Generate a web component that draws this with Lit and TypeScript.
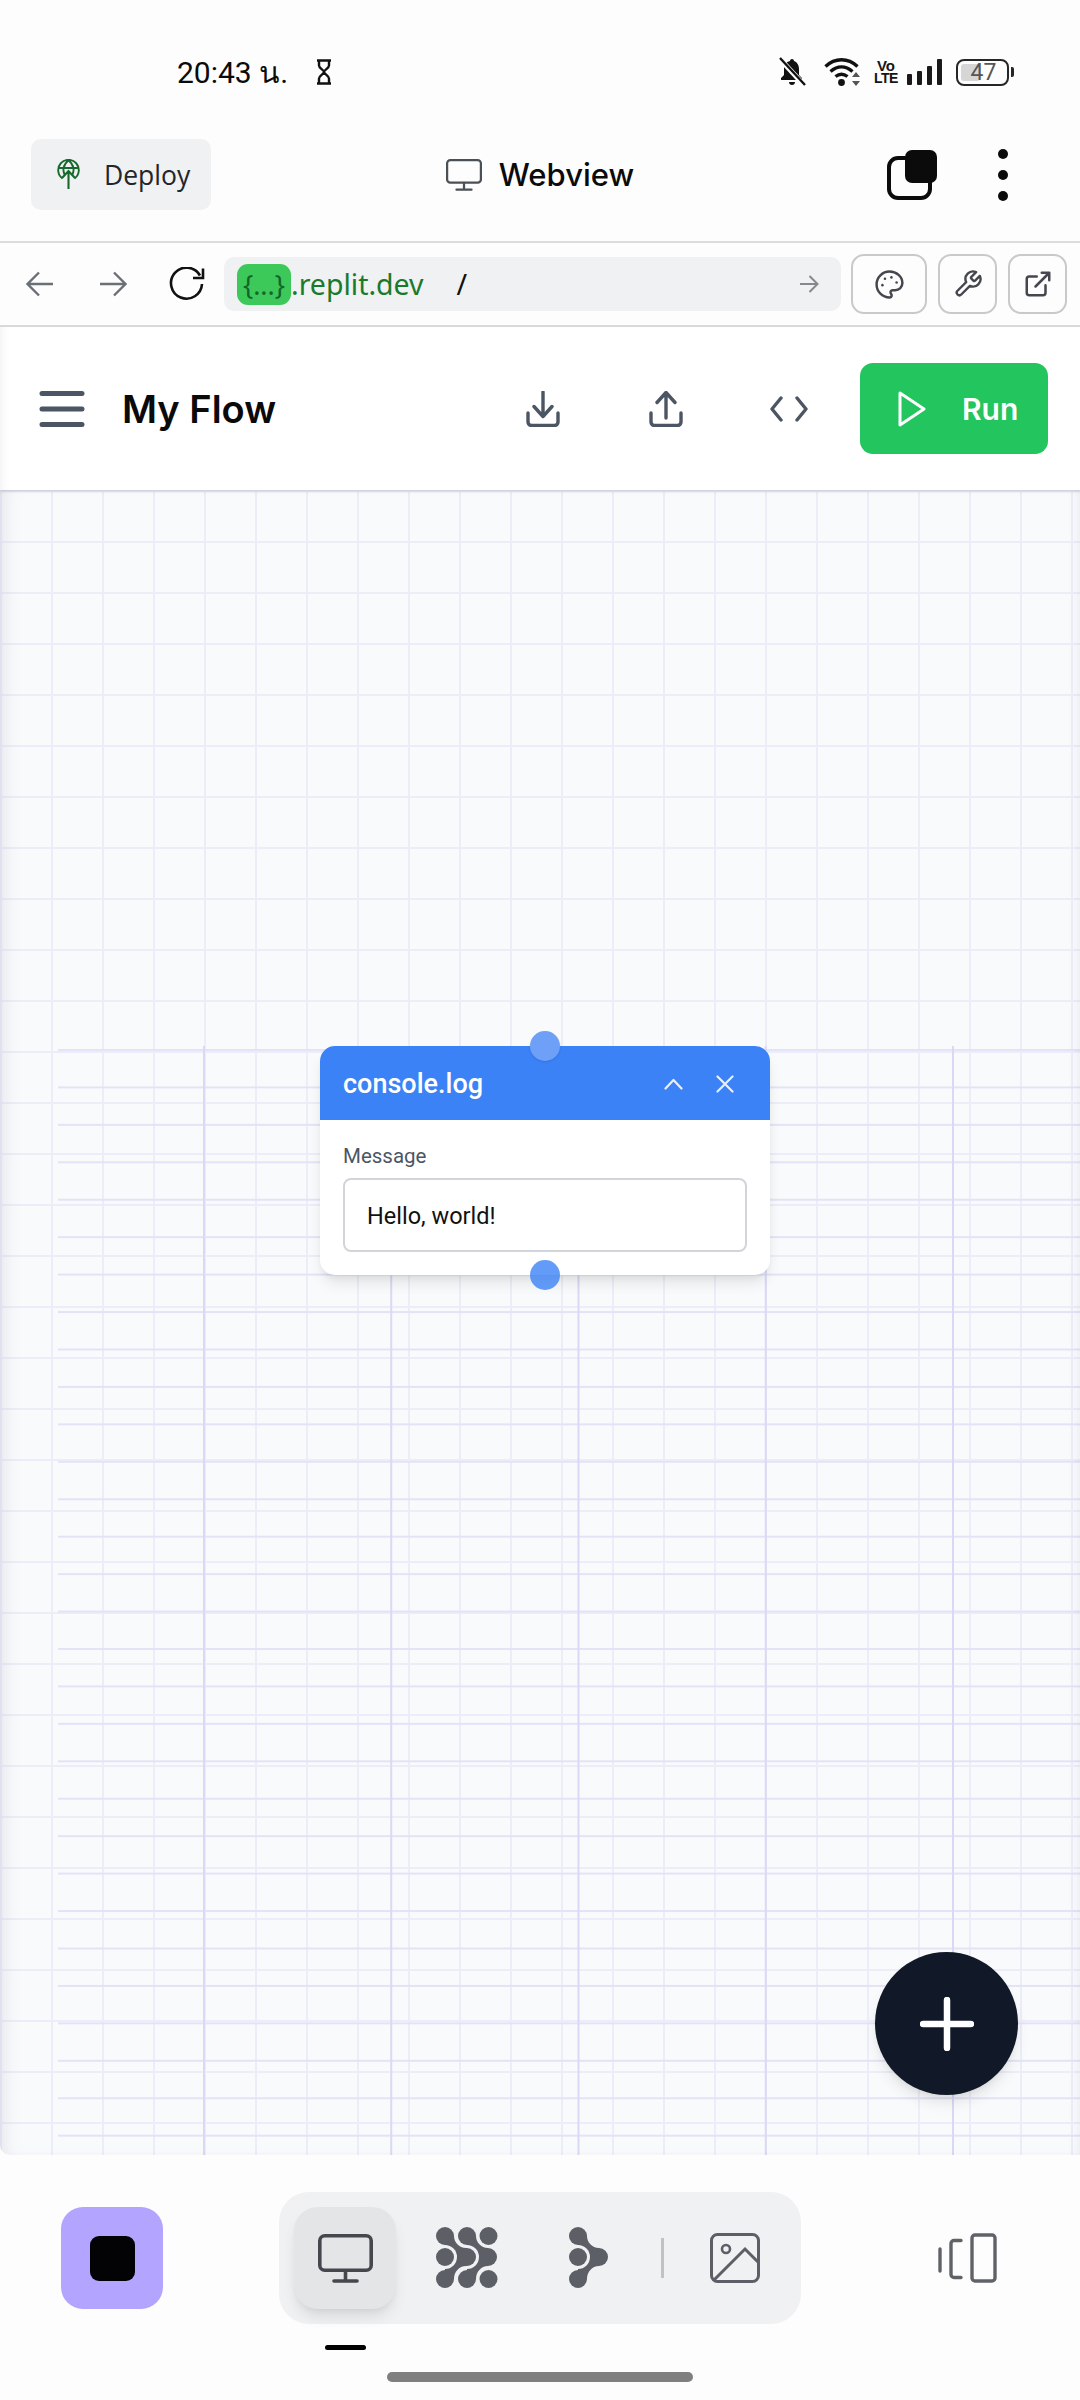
import { LitElement, html, css, svg } from 'lit';
import { customElement } from 'lit/decorators.js';

const DARK = '#4b5563';
const TAB = '#5c5f66';
const TAB_BG = '#f0f1f3';
const TOOL = '#44474d';
const SIGNAL_BARS = [11, 14, 19, 26];

const icon = (w: number, h: number, vb: string, body: unknown) => html`
  <svg width="${w}" height="${h}" viewBox="${vb}" fill="none" aria-hidden="true">${body}</svg>
`;

const monitor = (w: number, h: number, color: string, sw: number) => icon(w, h, '0 0 55 49', svg`
  <rect x="${sw / 2}" y="${sw / 2}" width="${55 - sw}" height="${38 - sw}" rx="5" stroke="${color}" stroke-width="${sw}" />
  <path d="M27.5 38v9M16 47h23" stroke="${color}" stroke-width="${sw}" stroke-linecap="round" />
`);

/* one "branch": two dots flowing into a blob on their right, with a gap cut round the middle dot */
const branch = (x: number) => svg`
  <path d="M${x} 9H${x + 9}C${x + 9} 15 ${x + 14} 21 ${x + 21} 21V39C${x + 14} 39 ${x + 9} 45 ${x + 9} 52H${x}Z" fill="${TAB}" />
  <circle cx="${x + 21}" cy="30" r="9" fill="${TAB}" />
  <path d="M${x} 18A12 12 0 0 1 ${x} 42Z" fill="${TAB_BG}" />
  <circle cx="${x}" cy="30" r="9" fill="${TAB}" />
  <circle cx="${x}" cy="9" r="9" fill="${TAB}" />
  <circle cx="${x}" cy="52" r="9" fill="${TAB}" />
`;

@customElement('app-root')
export class AppRoot extends LitElement {
  static styles = css`
    :host {
      display: flex;
      flex-direction: column;
      width: 1080px;
      height: 2400px;
      overflow: hidden;
      background: #fdfdfd;
      font-family: Roboto, "Noto Sans", sans-serif;
      color: #0b0b0b;
    }

    svg { display: block; flex: none; }

    /* status bar */
    .status {
      display: flex;
      align-items: center;
      height: 110px;
      padding: 34px 71px 0 177px;
      box-sizing: border-box;
    }
    .time { font-size: 30px; width: 138px; font-family: Roboto, "Noto Sans", "DejaVu Sans", sans-serif; }
    .status-right { display: flex; align-items: center; gap: 18px; margin-left: auto; }
    .volte {
      display: flex;
      flex-direction: column;
      align-items: center;
      margin-left: -3px;
      width: 20px;
      font: 700 15px/13px "Liberation Sans", sans-serif;
      color: #151515;
    }
    .volte span + span { font-size: 14px; letter-spacing: -0.5px; }
    .signal { display: flex; align-items: flex-end; gap: 5px; height: 26px; margin-left: -7px; }
    .signal i { display: block; width: 5px; background: #1a1a1a; border-radius: 1px; }
    .battery {
      position: relative;
      display: flex;
      align-items: center;
      justify-content: center;
      width: 53px;
      height: 27px;
      margin-left: -4px;
      box-sizing: border-box;
      border: 2.5px solid #262626;
      border-radius: 8px;
      font-size: 23px;
      color: #555;
    }
    .battery .level {
      position: absolute;
      left: 3px;
      top: 3px;
      bottom: 3px;
      width: 19px;
      background: #d6d6d6;
      border-radius: 3px;
    }
    .battery span { position: relative; padding-left: 2px; }
    .battery::after {
      content: '';
      position: absolute;
      right: -7px;
      top: 6px;
      width: 3px;
      height: 10px;
      background: #262626;
      border-radius: 0 2px 2px 0;
    }

    /* replit header */
    .header {
      display: grid;
      grid-template-columns: 1fr auto 1fr;
      align-items: center;
      height: 133px;
      padding: 0 31px 2px;
      box-sizing: border-box;
      border-bottom: 2.5px solid #dcdcdc;
    }
    .deploy {
      display: flex;
      align-items: center;
      gap: 24px;
      width: 180px;
      height: 71px;
      padding-left: 26px;
      box-sizing: border-box;
      background: #f0f1f3;
      border-radius: 10px;
      font: 400 26.5px "Open Sans", sans-serif;
      color: #22252a;
    }
    .title { display: flex; align-items: center; gap: 17px; font: 500 31px Inter, sans-serif; }
    .header-right { display: flex; align-items: center; justify-content: flex-end; gap: 61px; padding-right: 41px; }
    .dots { display: flex; flex-direction: column; gap: 11px; }
    .dots i { display: block; width: 10px; height: 10px; border-radius: 50%; background: #0b0b0b; }

    /* url row */
    .url-row {
      display: flex;
      align-items: center;
      height: 84px;
      padding: 0 13px 0 3px;
      box-sizing: border-box;
      border-bottom: 2.5px solid #dcdcdc;
    }
    .nav { display: flex; justify-content: center; width: 73px; }
    .url {
      display: flex;
      align-items: center;
      flex: 1;
      height: 54px;
      margin: 0 10px 0 2px;
      padding: 0 22px 0 13px;
      background: #f0f1f3;
      border-radius: 10px;
      font: 400 28.5px "Noto Sans", sans-serif;
      color: #1a7a2c;
    }
    .chip {
      display: flex;
      align-items: center;
      justify-content: center;
      width: 54px;
      height: 41px;
      background: #3cc95a;
      border-radius: 11px;
      font-size: 27px;
      color: #12662a;
    }
    .slash { margin-left: 33px; color: #111; }
    .url svg { margin-left: auto; }
    .tool {
      display: flex;
      align-items: center;
      justify-content: center;
      height: 60px;
      box-sizing: border-box;
      border: 2px solid #c9c9c9;
      border-radius: 13px;
      margin-left: 11px;
    }
    .tool.first { margin-left: 0; width: 76px; }
    .tool.narrow { width: 59px; }

    /* flow toolbar */
    .toolbar {
      position: relative;
      z-index: 1;
      display: flex;
      align-items: center;
      height: 163px;
      padding: 0 32px 0 39px;
      box-sizing: border-box;
      background: #fff;
      box-shadow: 0 1px 3px rgba(60, 60, 80, 0.2), inset 12px 0 12px -12px rgba(0, 0, 0, 0.08);
    }
    .toolbar h1 { margin: 0 0 0 37px; font: 600 38px Inter, sans-serif; color: #0a0a0a; }
    .slots { display: flex; gap: 43px; margin-left: auto; margin-right: 31px; }
    .slot { display: flex; align-items: center; justify-content: center; width: 80px; }
    .run {
      display: flex;
      align-items: center;
      gap: 36px;
      width: 188px;
      height: 91px;
      padding-left: 38px;
      box-sizing: border-box;
      background: #22c55e;
      border-radius: 13px;
      font: 600 30px Inter, sans-serif;
      color: #fff;
    }

    /* canvas */
    .canvas {
      position: relative;
      flex: 1;
      overflow: hidden;
      background-color: #f9fafc;
      background-image:
        linear-gradient(to right, #ededf9 2.5px, transparent 2.5px),
        linear-gradient(to bottom, #ededf9 2.5px, transparent 2.5px);
      background-size: 51px 51px;
      border-bottom-left-radius: 10px;
    }
    .edge {
      position: absolute;
      inset: 0;
      pointer-events: none;
      box-shadow: inset 14px 0 18px -10px rgba(120, 120, 140, 0.16), inset -8px 0 12px -8px rgba(120, 120, 140, 0.14);
    }
    .flow-grid {
      position: absolute;
      left: 58px;
      top: 556px;
      right: 0;
      bottom: 0;
      background-image:
        linear-gradient(to right, #d9d9f5 2px, transparent 2px),
        linear-gradient(to bottom, #e3e3f8 2px, transparent 2px);
      background-size: 187.25px 100%, 100% 37.45px;
      background-position: 145px 0, 0 3px;
    }
    .node {
      position: absolute;
      left: 320px;
      top: 556px;
      width: 450px;
      height: 229px;
      background: #fff;
      border-radius: 15px;
      box-shadow: 0 10px 15px -3px rgba(0, 0, 0, 0.1), 0 4px 6px -2px rgba(0, 0, 0, 0.06);
    }
    .node-head {
      display: flex;
      align-items: center;
      height: 74px;
      padding: 1px 36px 0 23px;
      box-sizing: border-box;
      background: #3b82f6;
      border-radius: 15px 15px 0 0;
      font: 500 27px Roboto, sans-serif;
      color: #fff;
    }
    .node-head span { flex: 1; }
    .node-head svg + svg { margin-left: 33px; }
    .node-body { padding: 24px 23px 0; }
    .node-body label { display: block; font: 400 20.5px/24px Roboto, sans-serif; color: #4b5563; }
    .field {
      display: flex;
      align-items: center;
      height: 74px;
      margin-top: 10px;
      padding: 2px 0 0 22px;
      box-sizing: border-box;
      border: 2px solid #d1d5db;
      border-radius: 8px;
      font: 400 23.5px Roboto, sans-serif;
      color: #111;
    }
    .handle {
      position: absolute;
      left: 210px;
      width: 30px;
      height: 30px;
      border-radius: 50%;
      background: rgba(59, 130, 246, 0.8);
    }
    .handle.top { top: -15px; background: #6ea0f8; box-shadow: 0 1px 2px rgba(30, 60, 140, 0.2); }
    .handle.bottom { bottom: -15px; }
    .fab {
      position: absolute;
      left: 875px;
      top: 1462px;
      display: flex;
      align-items: center;
      justify-content: center;
      width: 143px;
      height: 143px;
      border-radius: 50%;
      background: #111827;
      box-shadow: 0 10px 15px -3px rgba(0, 0, 0, 0.1), 0 4px 6px -2px rgba(0, 0, 0, 0.05);
    }

    /* bottom dock */
    .dock {
      height: 245px;
      padding-top: 37px;
      box-sizing: border-box;
      background: #fdfdfd;
    }
    .dock-row { display: flex; align-items: flex-start; height: 180px; }
    .stop {
      display: flex;
      align-items: center;
      justify-content: center;
      width: 102px;
      height: 102px;
      margin: 15px 0 0 61px;
      background: #b3a4ff;
      border-radius: 22px;
    }
    .stop i { display: block; width: 45px; height: 45px; background: #030305; border-radius: 9px; }
    .tabs-wrap { margin-left: 116px; }
    .tabs {
      display: flex;
      align-items: center;
      width: 522px;
      height: 132px;
      padding-left: 15px;
      box-sizing: border-box;
      background: #f0f1f3;
      border-radius: 30px;
    }
    .tab { display: flex; align-items: center; justify-content: center; width: 122px; height: 102px; }
    .tab.active {
      width: 102px;
      margin-right: 10px;
      background: #e4e5e7;
      border-radius: 24px;
      box-shadow: 0 10px 15px -3px rgba(0, 0, 0, 0.1), 0 4px 6px -2px rgba(0, 0, 0, 0.05);
    }
    .sep-wrap { display: flex; justify-content: center; width: 24px; }
    .sep { width: 3px; height: 40px; background: #c2c2c4; }
    .indicator { width: 41px; height: 5px; margin: 21px 0 0 46px; background: #000; border-radius: 3px; }
    .side { margin: 41px 0 0 137px; }
    .home { width: 306px; height: 10px; margin: 0 auto; background: #7f7f7f; border-radius: 5px; }
  `;

  render() {
    return html`
      <div class="status">
        <span class="time">20:43 น.</span>
        ${icon(18, 26, '0 0 18 26', svg`
          <path d="M2 1.5h14M2 24.5h14M4 1.5v5c0 3 5 4.5 5 6.5s-5 3.5-5 6.5v5M14 1.5v5c0 3-5 4.5-5 6.5s5 3.5 5 6.5v5" stroke="#111" stroke-width="2.4" />
        `)}
        <div class="status-right">
          ${icon(28, 30, '0 0 28 30', svg`
            <path d="M14 2c-1.4 0-2 1-2 2-4 1-6 4-6 8v6l-3 3v2h21v-2l-3-3v-6c0-4-2-7-5-8 0-1-.6-2-2-2zM11 25h6c0 2-1.3 3-3 3s-3-1-3-3z" fill="#111" />
            <path d="M2 2l24 26" stroke="#fdfdfd" stroke-width="5" />
            <path d="M2 1l25 27" stroke="#111" stroke-width="2.4" />
          `)}
          ${icon(37, 30, '0 0 37 30', svg`
            <path d="M1.5 9.5C11 .5 24 .5 33.5 9.5M6.5 14.5c7-6 15-6 22 0M11.5 19.5c4-3 8-3 12 0" stroke="#111" stroke-width="3.4" />
            <circle cx="17.5" cy="25.5" r="3.4" fill="#111" />
            <path d="M32 15l4 5h-8zM32 29l4-5h-8z" fill="#555" />
          `)}
          <div class="volte"><span>Vo</span><span>LTE</span></div>
          <div class="signal">
            ${SIGNAL_BARS.map((h) => html`<i style="height:${h}px"></i>`)}
          </div>
          <div class="battery"><div class="level"></div><span>47</span></div>
        </div>
      </div>

      <div class="header">
        <div class="deploy">
          ${icon(23, 31, '0 0 23 31', svg`
            <path d="M5.5 19.5a10.3 10.3 0 1 1 12 0M1.5 9h20M11.5 1.2c-6 5-6 11-3.5 15M11.5 1.2c6 5 6 11 3.5 15" stroke="#17692c" stroke-width="1.9" />
            <path d="M11.5 30V12M5 19l6.5-7 6.5 7" stroke="#17692c" stroke-width="2.1" />
          `)}
          <span>Deploy</span>
        </div>
        <div class="title">${monitor(36, 34, '#4b4f56', 3.4)}<span>Webview</span></div>
        <div class="header-right">
          ${icon(50, 50, '0 0 50 50', svg`
            <rect x="2" y="8" width="41" height="40" rx="9" stroke="#0b0b0b" stroke-width="4" />
            <rect x="18" y="0" width="32" height="33" rx="7" fill="#0b0b0b" />
          `)}
          <div class="dots"><i></i><i></i><i></i></div>
        </div>
      </div>

      <div class="url-row">
        <div class="nav">
          ${icon(28, 26, '0 0 28 26', svg`<path d="M27 13H2M13 1.5L1.5 13 13 24.5" stroke="#6b6f76" stroke-width="2.4" />`)}
        </div>
        <div class="nav">
          ${icon(28, 26, '0 0 28 26', svg`<path d="M1 13h25M15 1.5L26.5 13 15 24.5" stroke="#6b6f76" stroke-width="2.4" />`)}
        </div>
        <div class="nav">
          ${icon(38, 34, '0 0 38 34', svg`
            <path d="M33 8.5A15.5 15.5 0 1 0 35 17" stroke="#111" stroke-width="2.6" />
            <path d="M36 1.5v9.5H26" stroke="#111" stroke-width="2.6" />
          `)}
        </div>
        <div class="url">
          <span class="chip">{...}</span><span>.replit.dev</span><span class="slash">/</span>
          ${icon(20, 20, '0 0 20 20', svg`<path d="M1 10h17M10.5 2l8 8-8 8" stroke="#85888d" stroke-width="2" />`)}
        </div>
        <div class="tool first">
          ${icon(31, 31, '0 0 24 24', svg`
            <path d="M12 2C6.5 2 2 6.5 2 12s4.5 10 10 10c.926 0 1.648-.746 1.648-1.688 0-.437-.18-.835-.437-1.125-.29-.289-.438-.652-.438-1.125a1.64 1.64 0 0 1 1.668-1.668h1.996c3.051 0 5.555-2.503 5.555-5.554C21.965 6.012 17.461 2 12 2z" stroke="${TOOL}" stroke-width="1.9" stroke-linejoin="round" />
            <circle cx="13.5" cy="6.5" r="1" fill="${TOOL}" /><circle cx="17.5" cy="10.5" r="1" fill="${TOOL}" />
            <circle cx="8.5" cy="7.5" r="1" fill="${TOOL}" /><circle cx="6.5" cy="12.5" r="1" fill="${TOOL}" />
          `)}
        </div>
        <div class="tool narrow">
          ${icon(30, 30, '0 0 24 24', svg`
            <path d="M14.7 6.3a1 1 0 0 0 0 1.4l1.6 1.6a1 1 0 0 0 1.4 0l3.77-3.77a6 6 0 0 1-7.94 7.94l-6.91 6.91a2.12 2.12 0 0 1-3-3l6.91-6.91a6 6 0 0 1 7.94-7.94l-3.76 3.76z" stroke="${TOOL}" stroke-width="1.9" stroke-linejoin="round" />
          `)}
        </div>
        <div class="tool narrow">
          ${icon(30, 30, '0 0 24 24', svg`
            <path d="M15 3h6v6M10 14 21 3M18 13v6a2 2 0 0 1-2 2H5a2 2 0 0 1-2-2V8a2 2 0 0 1 2-2h6" stroke="${TOOL}" stroke-width="2" stroke-linecap="round" stroke-linejoin="round" />
          `)}
        </div>
      </div>

      <div class="toolbar">
        ${icon(46, 36, '0 0 46 36', svg`<path d="M3 2.5h40M3 18h40M3 33.5h40" stroke="${DARK}" stroke-width="5" stroke-linecap="round" />`)}
        <h1>My Flow</h1>
        <div class="slots">
          <div class="slot">
            ${icon(34, 36, '0 0 34 36', svg`
              <path d="M17 1v24M8 15.5l9 10 9-10" stroke="${DARK}" stroke-width="3.4" stroke-linecap="round" stroke-linejoin="round" />
              <path d="M2 22v9c0 2 1.5 3.5 3.5 3.5h23c2 0 3.5-1.5 3.5-3.5v-9" stroke="${DARK}" stroke-width="3.4" stroke-linecap="round" />
            `)}
          </div>
          <div class="slot">
            ${icon(34, 36, '0 0 34 36', svg`
              <path d="M17 27V2M8 11.5l9-10 9 10" stroke="${DARK}" stroke-width="3.4" stroke-linecap="round" stroke-linejoin="round" />
              <path d="M2 22v9c0 2 1.5 3.5 3.5 3.5h23c2 0 3.5-1.5 3.5-3.5v-9" stroke="${DARK}" stroke-width="3.4" stroke-linecap="round" />
            `)}
          </div>
          <div class="slot">
            ${icon(38, 26, '0 0 38 26', svg`
              <path d="M11 2L2 13l9 11M27 2l9 11-9 11" stroke="${DARK}" stroke-width="3.4" stroke-linecap="round" stroke-linejoin="round" />
            `)}
          </div>
        </div>
        <div class="run">
          ${icon(28, 36, '0 0 28 36', svg`<path d="M2 2l24 16L2 34z" stroke="#fff" stroke-width="3" stroke-linejoin="round" />`)}
          <span>Run</span>
        </div>
      </div>

      <div class="canvas">
        <div class="flow-grid"></div>
        <div class="edge"></div>
        <div class="node">
          <div class="node-head">
            <span>console.log</span>
            ${icon(19, 12, '0 0 19 12', svg`<path d="M1.5 10.5l8-8.5 8 8.5" stroke="#e8f0ff" stroke-width="2.2" stroke-linecap="round" stroke-linejoin="round" />`)}
            ${icon(18, 18, '0 0 18 18', svg`<path d="M1.5 1.5l15 15M16.5 1.5l-15 15" stroke="#e8f0ff" stroke-width="2.2" stroke-linecap="round" />`)}
          </div>
          <div class="node-body">
            <label>Message</label>
            <div class="field">Hello, world!</div>
          </div>
          <div class="handle top"></div>
          <div class="handle bottom"></div>
        </div>
        <div class="fab">
          ${icon(54, 54, '0 0 54 54', svg`<path d="M27 3v48M3 27h48" stroke="#fff" stroke-width="6.5" stroke-linecap="round" />`)}
        </div>
      </div>

      <div class="dock">
        <div class="dock-row">
          <div class="stop"><i></i></div>
          <div class="tabs-wrap">
            <div class="tabs">
              <div class="tab active">${monitor(55, 49, '#44474d', 3.6)}</div>
              <div class="tab">
                ${icon(62, 62, '0 0 62 62', svg`
                  ${branch(9)}
                  ${branch(31)}
                  <circle cx="52.5" cy="9" r="9" fill="${TAB}" />
                  <circle cx="52.5" cy="52" r="9" fill="${TAB}" />
                `)}
              </div>
              <div class="tab">
                ${icon(40, 62, '0 0 40 62', svg`${branch(9)}`)}
              </div>
              <div class="sep-wrap"><div class="sep"></div></div>
              <div class="tab">
                ${icon(50, 50, '0 0 50 50', svg`
                  <rect x="1.5" y="1.5" width="47" height="47" rx="6" stroke="${TAB}" stroke-width="3" />
                  <circle cx="16" cy="16" r="4" stroke="${TAB}" stroke-width="2.6" />
                  <path d="M4 47l31-31 13 13" stroke="${TAB}" stroke-width="3" />
                `)}
              </div>
            </div>
            <div class="indicator"></div>
          </div>
          <div class="side">
            ${icon(59, 50, '0 0 59 50', svg`
              <path d="M2 16v22" stroke="#5f6368" stroke-width="3.4" stroke-linecap="round" />
              <path d="M23 7.5h-7a3 3 0 0 0-3 3v31a3 3 0 0 0 3 3h7" stroke="#5f6368" stroke-width="3.4" stroke-linecap="round" />
              <rect x="34" y="2" width="23" height="46" rx="3" stroke="#5f6368" stroke-width="3.4" />
            `)}
          </div>
        </div>
        <div class="home"></div>
      </div>
    `;
  }
}

declare global {
  interface HTMLElementTagNameMap {
    'app-root': AppRoot;
  }
}
